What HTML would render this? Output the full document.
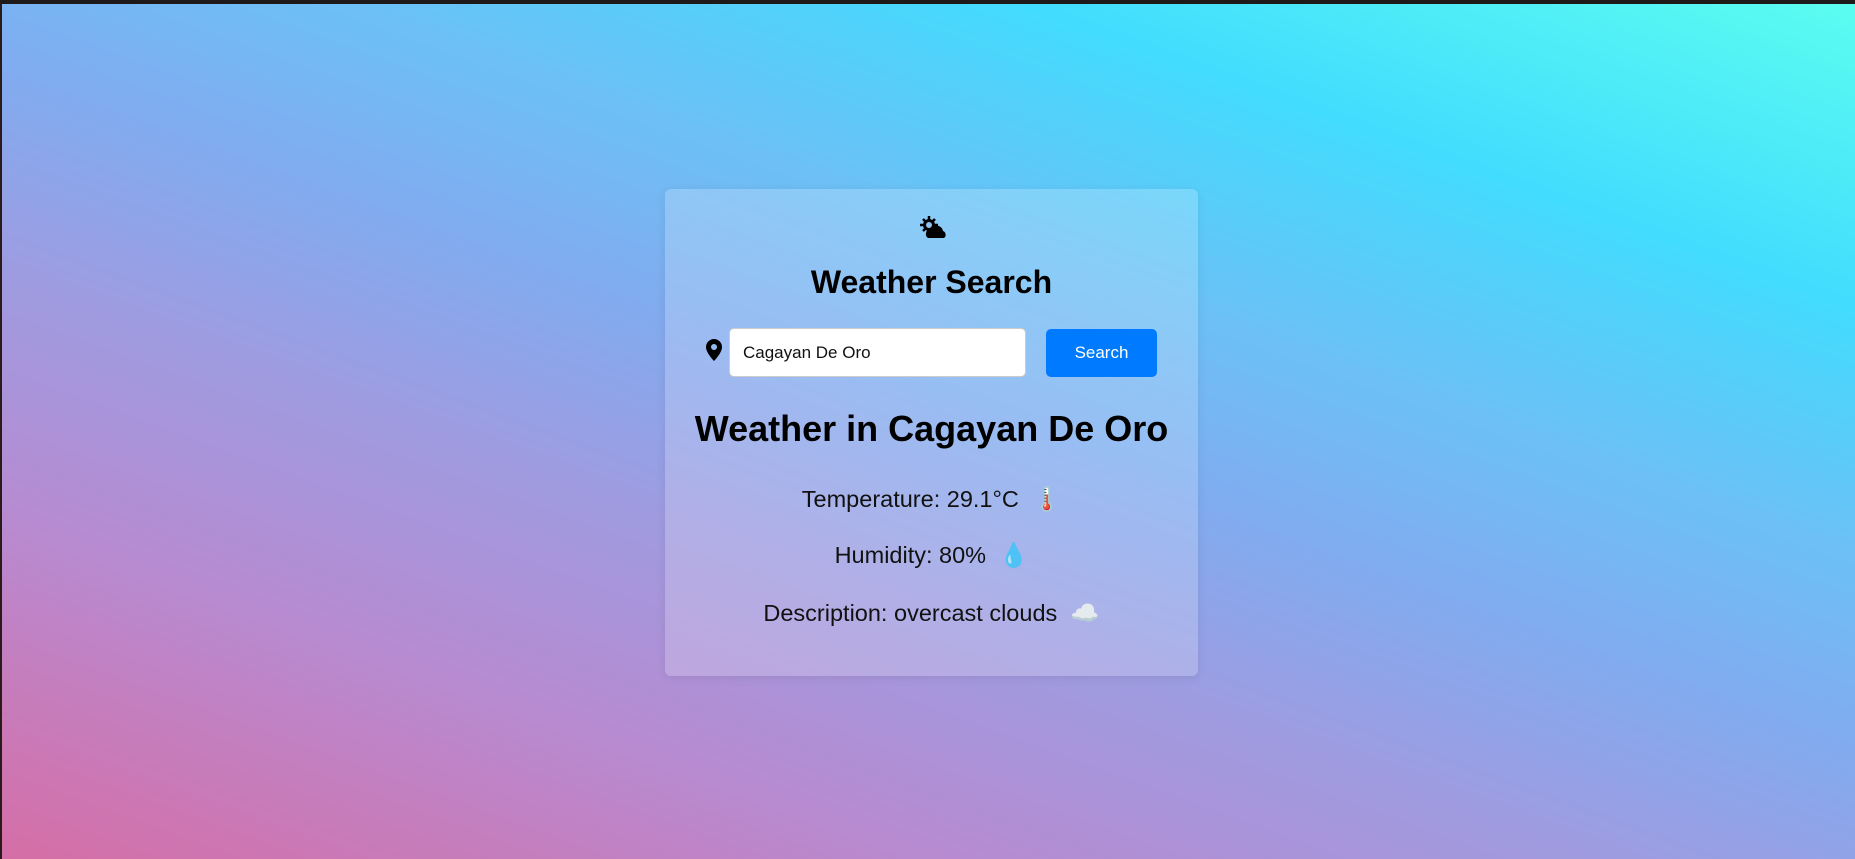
<!DOCTYPE html>
<html><head><style>
html,body{margin:0;padding:0;width:1855px;height:859px;overflow:hidden;font-family:"Liberation Sans",Arial,sans-serif}
body{background:linear-gradient(20deg,#d56ea6 0%,#b88ad0 22%,#9f9be0 38%,#80acf0 52%,#6cc0f6 64%,#42dcfe 80%,#5cfdf0 100%);position:relative;border-top:4px solid #1e1a1a;border-left:2px solid #2a1a1a;box-sizing:border-box}
.card{position:absolute;left:663px;top:185px;width:533px;height:487px;border-radius:6px;background:rgba(255,255,255,0.2);box-shadow:0 2px 10px rgba(0,0,0,0.08);text-align:center}
h1{margin:0;font-size:32px;font-weight:bold;position:absolute;left:0;right:0;top:75px}
h2{margin:0;font-size:36px;font-weight:bold;position:absolute;left:0;right:0;top:219px}
.input{position:absolute;left:64px;top:139px;width:297px;height:49px;background:#fff;border:1px solid #ccc;border-radius:5px;box-sizing:border-box;font-size:17px;line-height:47px;text-align:left;padding-left:13px;color:#111}
.btn{position:absolute;left:381px;top:140px;width:111px;height:48px;background:#007bff;border-radius:5px;color:#fff;font-size:17px;line-height:48px}
p{margin:0;position:absolute;left:0;right:0;font-size:23.5px;color:#111}
</style></head><body>
<div class="card">
<svg style="position:absolute;left:255px;top:27px" width="28" height="24" viewBox="0 0 28 24">
<g fill="#000"><circle cx="9" cy="9" r="6"/>
<g stroke="#000" stroke-width="2.5"><line x1="9" y1="0" x2="9" y2="18"/><line x1="0" y1="9" x2="18" y2="9"/><line x1="3" y1="3" x2="15" y2="15"/><line x1="15" y1="3" x2="3" y2="15"/></g>
<circle cx="9" cy="9" r="3" fill="#8fc0f0"/>
<path d="M8 22 a5 5 0 0 1 2-9 a7 7 0 0 1 13 2 a4 4 0 0 1 1 7 z"/></g></svg>
<h1>Weather Search</h1>
<svg style="position:absolute;left:41px;top:150px" width="16" height="22" viewBox="0 0 16 22"><path d="M8 0a8 8 0 0 0-8 8c0 6 8 14 8 14s8-8 8-14a8 8 0 0 0-8-8z" fill="#000"/><circle cx="8" cy="8" r="3" fill="#8fbdf0"/></svg>
<div class="input">Cagayan De Oro</div>
<div class="btn">Search</div>
<h2>Weather in Cagayan De Oro</h2>
<p style="top:296px">Temperature: 29.1°C &nbsp;<span style="color:#e33">🌡️</span></p>
<p style="top:352px">Humidity: 80% &nbsp;<span style="color:#2cc8ff">💧</span></p>
<p style="top:410px">Description: overcast clouds &nbsp;<span>☁️</span></p>
</div>
</body></html>
